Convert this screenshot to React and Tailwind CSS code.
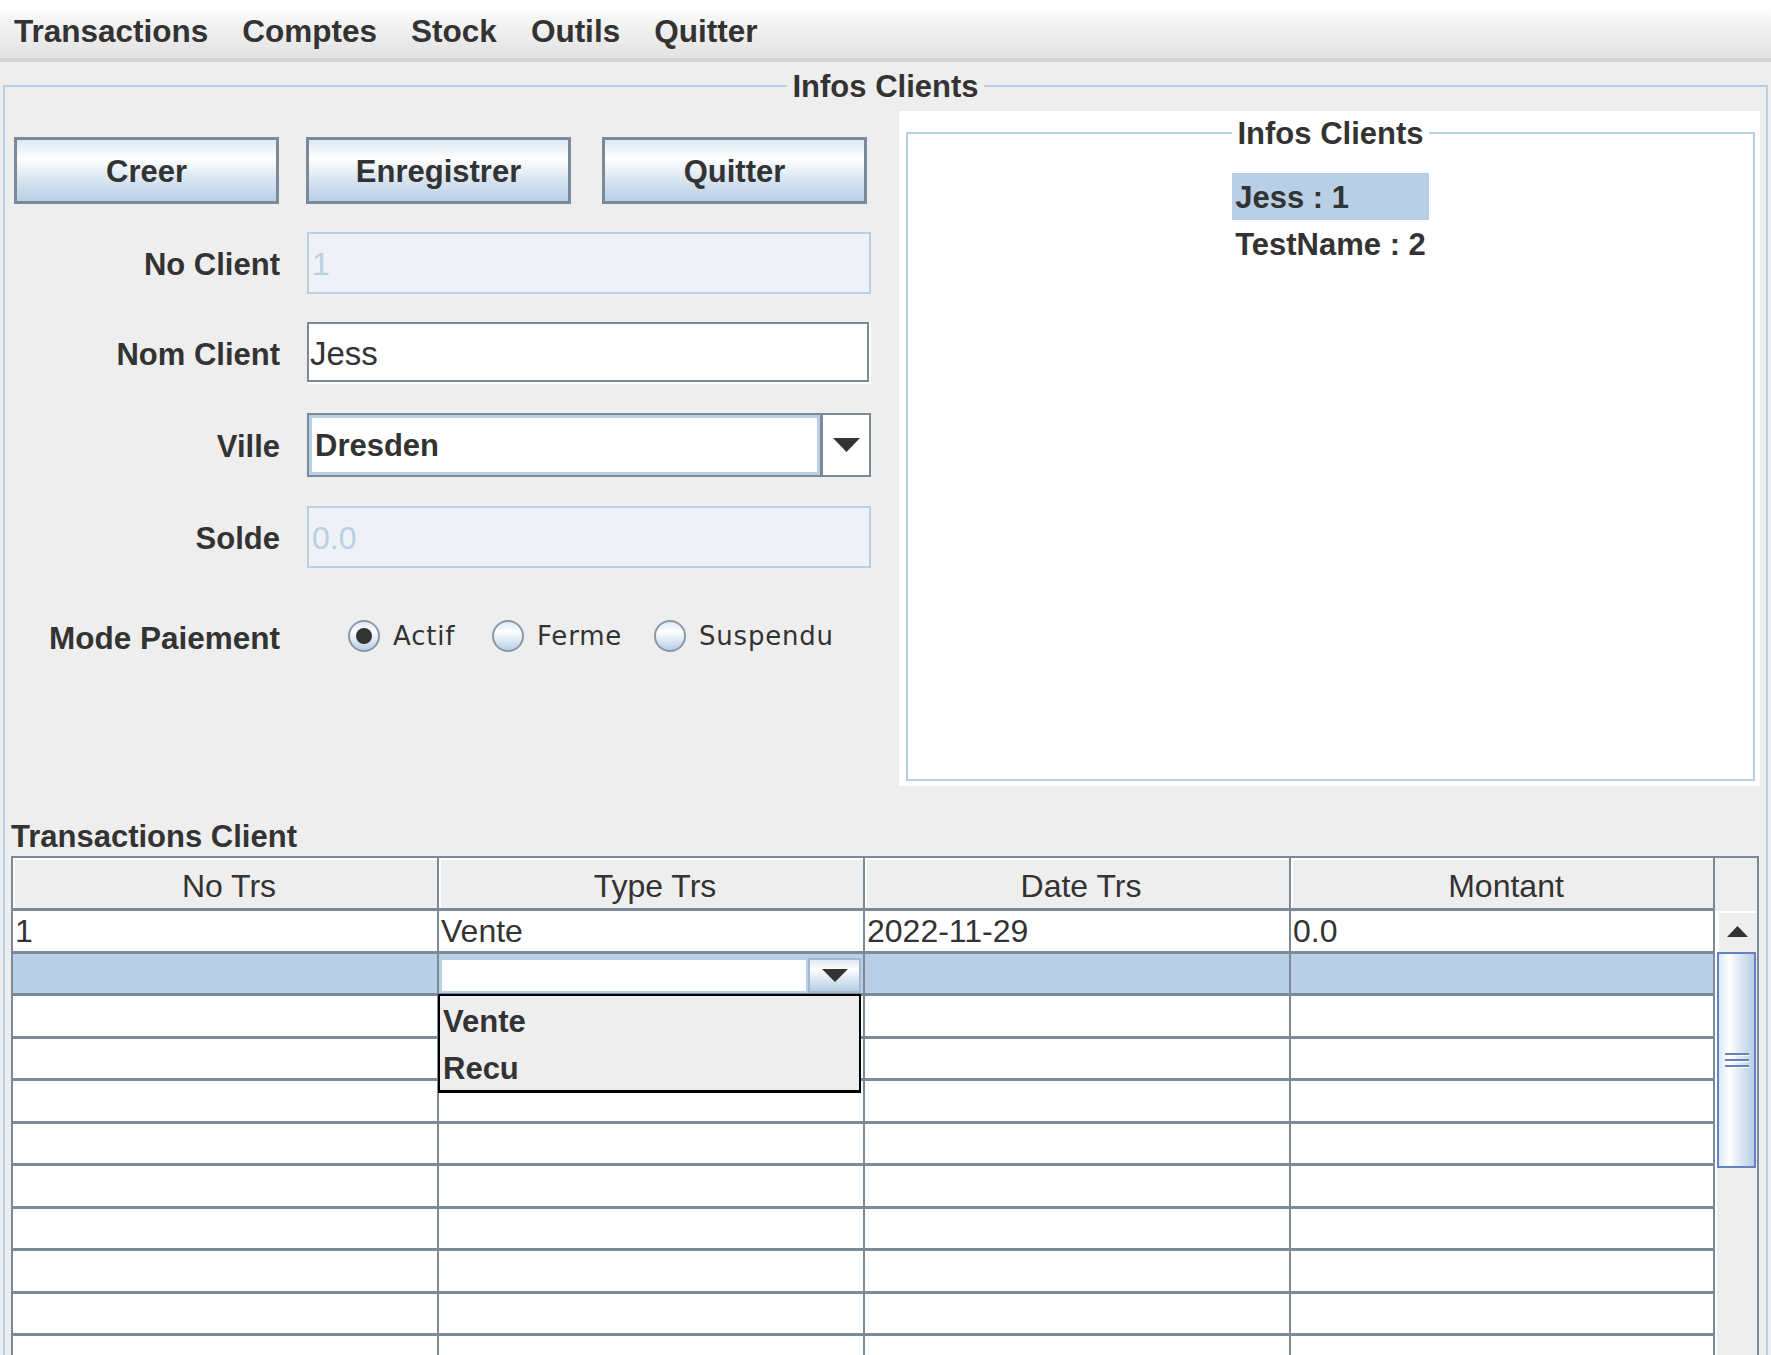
import React from 'react';

const menus = ['Transactions', 'Comptes', 'Stock', 'Outils', 'Quitter'];
const headers = ['No Trs', 'Type Trs', 'Date Trs', 'Montant'];
const clients = ['Jess : 1', 'TestName : 2'];

const btnBg = 'bg-[linear-gradient(to_bottom,#dde8f3_0%,#ffffff_30%,#dde8f3_60%,#b8cfe5_100%)]';

const Arrow = ({ up = false, w, h }) => (
  <svg width={w} height={h} viewBox={`0 0 ${w} ${h}`}>
    <polygon points={up ? `0,${h} ${w},${h} ${w / 2},0` : `0,0 ${w},0 ${w / 2},${h}`} fill="#333333" />
  </svg>
);

const Button = ({ label, className = '' }) => (
  <div
    className={`w-[265px] h-[67px] border-[3px] border-[#7a8a99] ${btnBg} flex items-center justify-center pt-[2px] font-bold text-[31px] leading-[36px] ${className}`}
  >
    {label}
  </div>
);

const Row = ({ label, className = '', children }) => (
  <div className={`flex items-center ${className}`}>
    <span className="w-[266px] pt-[3px] text-right font-bold text-[31px] leading-[36px]">{label}</span>
    <div className="ml-[27px]">{children}</div>
  </div>
);

const DisabledField = ({ value }) => (
  <div className="w-[564px] h-[62px] border-2 border-[#b8cfe5] bg-[#eef2f6] pl-[3px] pt-[2px] flex items-center text-[32px] leading-[36px] text-[#b8cfe5]">
    {value}
  </div>
);

const Radio = ({ label, checked = false, className = '' }) => (
  <div className={`flex items-center gap-[13px] ${className}`}>
    <span className="w-[32px] h-[32px] rounded-full border-2 border-[#8a99a8] bg-[linear-gradient(to_bottom,#dde8f3_0%,#ffffff_35%,#dde8f3_65%,#b8cfe5_100%)] flex items-center justify-center">
      {checked && <span className="w-[16px] h-[16px] rounded-full bg-[#333333]" />}
    </span>
    <span className="font-['DejaVu_Sans',sans-serif] text-[26px] leading-[32px] tracking-[0.8px]">{label}</span>
  </div>
);

const App = () => {
  const rows = [['1', 'Vente', '2022-11-29', '0.0'], 'edit', ...Array(9).fill(null)];

  return (
    <div className="w-[1771px] h-[1355px] overflow-hidden bg-[#eeeeee] text-[#333333] font-['Liberation_Sans',Arial,sans-serif]">
      {/* menu bar */}
      <div className="h-[58px] pt-[13px] pl-[14px] flex gap-[34px] bg-[linear-gradient(to_bottom,#ffffff_0%,#ffffff_15%,#f4f4f4_35%,#e2e2e2_100%)] font-bold text-[31.5px] leading-[36px]">
        {menus.map((m) => (
          <span key={m}>{m}</span>
        ))}
      </div>
      <div className="h-[4px] bg-[#d2d2d2]" />

      <fieldset className="mt-[6px] ml-[3px] w-[1765px] h-[1330px] border-2 border-[#b8cfe5]">
        <legend className="mx-auto px-[5px] h-[36px] pt-[1px] font-bold text-[31px] leading-[36px]">Infos Clients</legend>

        <div className="flex">
          {/* form */}
          <div className="w-[866px] pl-[9px]">
            <div className="mt-[33px] flex">
              <Button label="Creer" />
              <Button label="Enregistrer" className="ml-[27px]" />
              <Button label="Quitter" className="ml-[31px]" />
            </div>

            <Row label="No Client" className="mt-[28px]">
              <DisabledField value="1" />
            </Row>

            <Row label="Nom Client" className="mt-[28px]">
              <div className="w-[564px] h-[62px] bg-white">
                <div className="w-[562px] h-[60px] border-2 border-[#7a8a99] bg-white pl-[1px] pt-[3px] flex items-center text-[33px] leading-[36px]">
                  Jess
                </div>
              </div>
            </Row>

            <Row label="Ville" className="mt-[29px]">
              <div className="w-[564px] h-[64px] border-2 border-[#7a8a99] flex">
                <div className="flex-1 border-[3px] border-[#b8cfe5] bg-white pl-[3px] pt-[2px] flex items-center font-bold text-[31px] leading-[36px]">
                  Dresden
                </div>
                <div className="w-[49px] border-l-[3px] border-[#7a8a99] bg-white flex items-center justify-center">
                  <Arrow w={27} h={14} />
                </div>
              </div>
            </Row>

            <Row label="Solde" className="mt-[29px]">
              <DisabledField value="0.0" />
            </Row>

            <div className="mt-[48px] h-[40px] flex items-center">
              <span className="w-[266px] pt-[3px] text-right font-bold text-[31.5px] leading-[36px]">Mode Paiement</span>
              <div className="ml-[68px] flex">
                <Radio label="Actif" checked className="w-[144px]" />
                <Radio label="Ferme" className="w-[162px]" />
                <Radio label="Suspendu" />
              </div>
            </div>
          </div>

          {/* clients list */}
          <div className="ml-[28px] mt-[7px] w-[861px] h-[675px] bg-white pt-[4px] pl-[7px]">
            <fieldset className="w-[849px] h-[666px] border-2 border-[#b8cfe5]">
              <legend className="mx-auto px-[5px] h-[36px] pt-[1px] font-bold text-[31px] leading-[36px]">Infos Clients</legend>
              <div className="mt-[22px] mx-auto w-fit">
                {clients.map((c, i) => (
                  <div
                    key={c}
                    className={`px-[3px] h-[47px] pt-[1px] font-bold text-[31px] leading-[47px] ${i === 0 ? 'bg-[#b8cfe5]' : ''}`}
                  >
                    {c}
                  </div>
                ))}
              </div>
            </fieldset>
          </div>
        </div>

        <div className="ml-[6px] mt-[32px] pt-[1px] h-[36px] font-bold text-[31px] leading-[36px]">Transactions Client</div>

        {/* table */}
        <div className="ml-[6px] mt-[2px] w-[1748px] border-2 border-b-0 border-[#7a8a99] bg-white">
          <div className="flex">
            {headers.map((h, i) => (
              <div
                key={h}
                className={`${i === 3 ? 'w-[424px]' : 'w-[426px]'} h-[53px] border-r-2 border-b-[3px] border-[#7a8a99] bg-[#eeeeee] shadow-[inset_2px_2px_0_#ffffff] pt-[7px] pl-[8px] text-center text-[32px] leading-[43px]`}
              >
                {h}
              </div>
            ))}
            <div className="w-[42px] h-[53px] bg-[#eeeeee]" />
          </div>

          <div className="flex">
            <div className="relative w-[1702px]">
              {rows.map((r, ri) => (
                <div key={ri} className={`flex h-[42.5px] ${r === 'edit' ? 'bg-[#b8cfe5]' : 'bg-white'}`}>
                  {[0, 1, 2, 3].map((ci) => (
                    <div
                      key={ci}
                      className={`${ci === 3 ? 'w-[424px]' : 'w-[426px]'} h-full border-r-2 border-b-[3px] border-[#7a8a99] pl-[2px] pt-[1px] text-[32px] leading-[39px]`}
                    >
                      {Array.isArray(r) && r[ci]}
                      {r === 'edit' && ci === 1 && (
                        <div className="mt-[3px] -ml-[1px] w-[421px] h-[35px] flex">
                          <div className="flex-1 bg-white border-2 border-[#b8cfe5]" />
                          <div className={`w-[53px] border-2 border-[#a3b8cc] ${btnBg} flex items-center justify-center`}>
                            <Arrow w={26} h={13} />
                          </div>
                        </div>
                      )}
                    </div>
                  ))}
                </div>
              ))}

              {/* open combo popup */}
              <div className="absolute left-[425px] top-[83px] w-[423px] h-[99px] border-2 border-b-[3px] border-black bg-[#eeeeee]">
                <div className="h-[48px] pt-[3px] pl-[3px] font-bold text-[31px] leading-[46px]">Vente</div>
                <div className="h-[46px] pt-[3px] pl-[3px] font-bold text-[31px] leading-[44px]">Recu</div>
              </div>
            </div>

            {/* scrollbar */}
            <div className="w-[42px] bg-[#eeeeee] shadow-[inset_2px_0_0_#ffffff]">
              <div className="h-[41px] ml-[2px] shadow-[inset_2px_2px_0_#ffffff] flex items-center justify-center">
                <Arrow up w={21} h={11} />
              </div>
              <div className="ml-[2px] w-[39px] h-[216px] border-2 border-[#6382bf] bg-[linear-gradient(to_right,#dde8f3_0%,#ffffff_30%,#dde8f3_60%,#b8cfe5_100%)] flex flex-col items-center justify-center gap-[4px]">
                <div className="w-[24px] h-[2px] bg-[#6382bf] shadow-[0_1px_0_#ffffff]" />
                <div className="w-[24px] h-[2px] bg-[#6382bf] shadow-[0_1px_0_#ffffff]" />
                <div className="w-[24px] h-[2px] bg-[#6382bf] shadow-[0_1px_0_#ffffff]" />
              </div>
            </div>
          </div>
        </div>
      </fieldset>
    </div>
  );
};

export default App;
